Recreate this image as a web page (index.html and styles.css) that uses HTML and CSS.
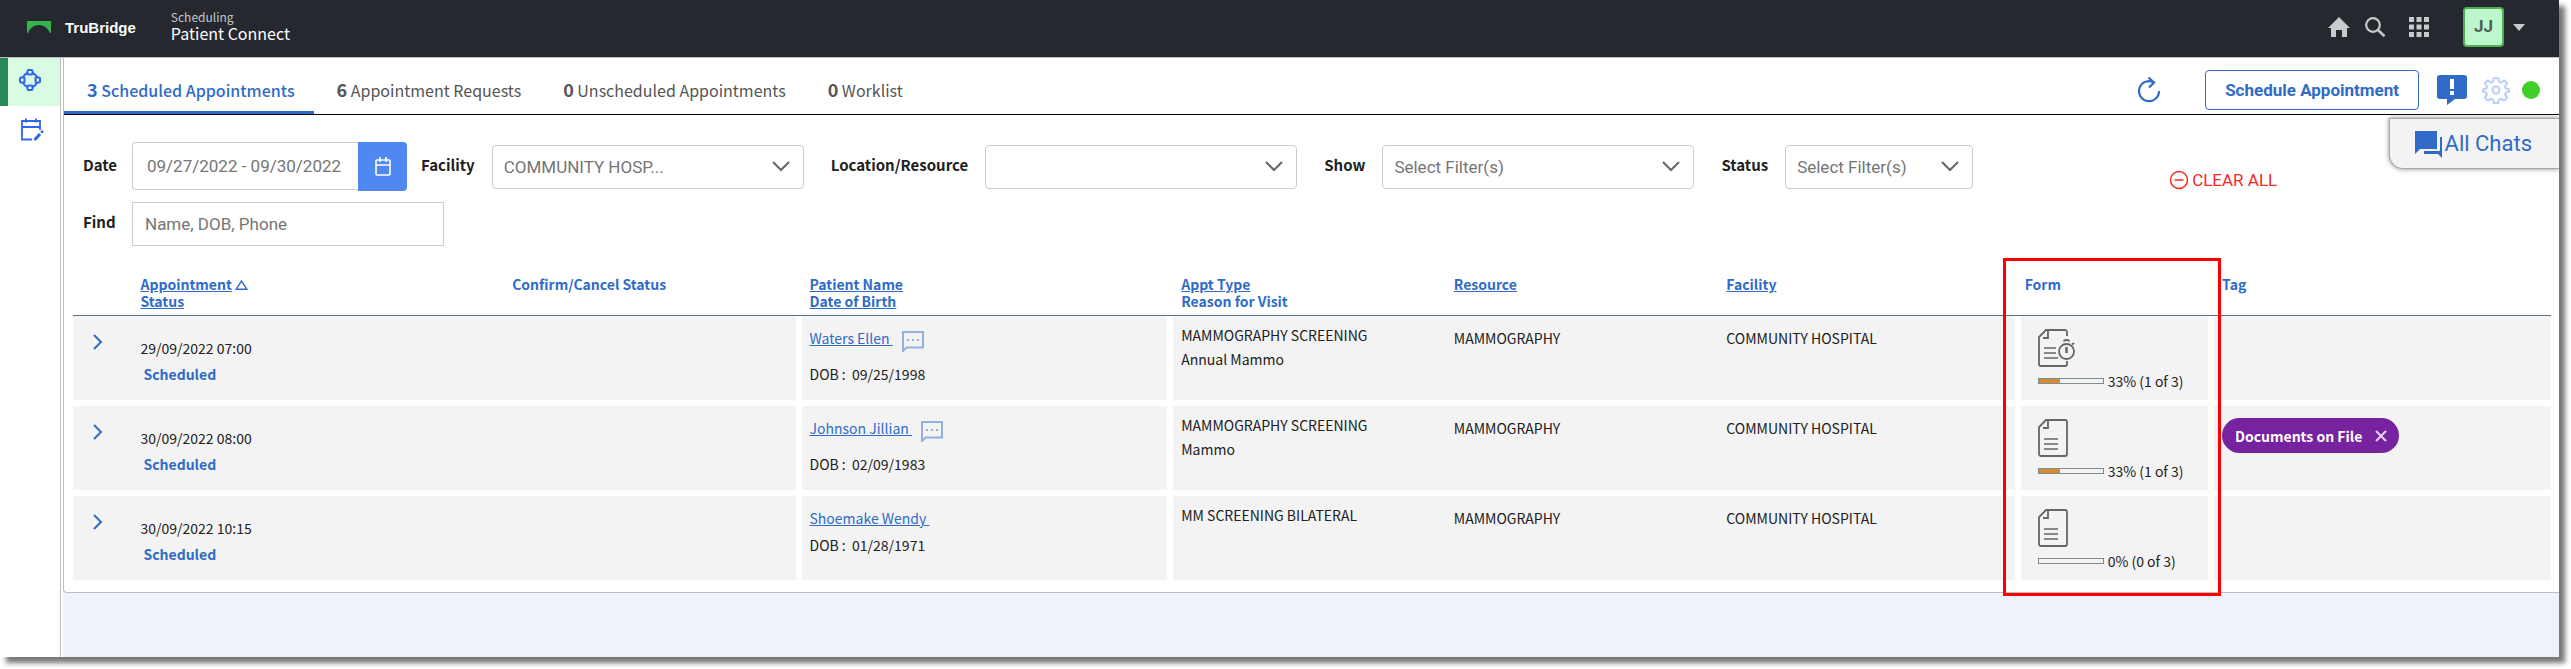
FILE: index.html
```
<!DOCTYPE html>
<html lang="en">
<head>
  <meta charset="UTF-8">
  <title>Patient Connect</title>
  <link rel="stylesheet" href="styles.css">
</head>
<body>
  <div class="app">
    <header class="topbar">
      <svg class="logo" width="24" height="12" viewBox="0 0 24 12"><path fill="#34b44a" d="M0 0h24v12h-1C21 7 17 4 12 4S3 7 1 12H0z"/></svg>
      <span class="brand">TruBridge</span>
      <div class="app-name">
        <small>Scheduling</small>
        <span>Patient Connect</span>
      </div>
      <nav class="top-icons">
        <button class="icon-btn" aria-label="Home"><svg width="22" height="20" viewBox="0 0 22 20"><path fill="#c9cacc" d="M11 0L0 11h3v9h5v-7h6v7h5v-9h3z"/></svg></button>
        <button class="icon-btn search" aria-label="Search"><svg width="21" height="20" viewBox="0 0 21 20" fill="none" stroke="#c9cacc"><circle cx="8" cy="8" r="6.8" stroke-width="2.2"/><path stroke-width="2.6" d="M13 13l6.5 6.2"/></svg></button>
        <button class="icon-btn apps" aria-label="Apps"><svg width="20" height="20" viewBox="0 0 20 20" fill="#c9cacc"><path d="M0 0h5v5H0zM7.500 0h5v5h-5zM15 0h5v5h-5zM0 7.500h5v5H0zM7.500 7.500h5v5h-5zM15 7.500h5v5h-5zM0 15h5v5H0zM7.500 15h5v5h-5zM15 15h5v5h-5z"/></svg></button>
        <button class="user" aria-label="User menu"><span class="avatar">JJ</span><svg width="12" height="7" viewBox="0 0 12 7"><path fill="#c9cacc" d="M0 0h12L6 7z"/></svg></button>
      </nav>
    </header>

    <div class="body">
      <aside class="sidebar">
        <a class="side-link active" href="#" aria-label="Patient connect">
          <svg width="22" height="22" viewBox="0 0 22 22" fill="none" stroke="#2f66ee" stroke-width="2"><circle cx="11" cy="11" r="7.500"/><g fill="#d9fbe3"><rect x="8.500" y="1" width="5" height="4.500" rx="1"/><rect x="8.500" y="16.500" width="5" height="4.500" rx="1"/><rect x="1" y="8.500" width="4.500" height="5" rx="1"/><rect x="16.500" y="8.500" width="4.500" height="5" rx="1"/></g></svg>
        </a>
        <a class="side-link" href="#" aria-label="Calendar">
          <svg width="24" height="24" viewBox="0 0 24 24" fill="none" stroke="#2f66ee" stroke-width="1.800"><path d="M12 21.500H2V3h18v9M2 9h18M6 .5v4M16 .5v4"/><path stroke-width="3" d="M14.500 22l5.500-6"/><path stroke-width="2.500" d="M21 14.500l2-1.500"/></svg>
        </a>
      </aside>

      <main class="panel">
        <div class="tabs">
          <a class="tab active" href="#"><b>3</b> Scheduled Appointments</a>
          <a class="tab" href="#"><b>6</b> Appointment Requests</a>
          <a class="tab" href="#"><b>0</b> Unscheduled Appointments</a>
          <a class="tab" href="#"><b>0</b> Worklist</a>
          <div class="actions">
            <button class="icon-btn" aria-label="Refresh"><svg width="24" height="28" viewBox="0 0 24 28" fill="none" stroke="#306bc7" stroke-width="2.200"><path d="M22 15a10 10 0 1 1-5-8.500"/><path d="M11.500 1.500l5.500 5-5 5"/></svg></button>
            <button class="schedule-btn">Schedule Appointment</button>
            <button class="icon-btn" aria-label="Alerts"><svg width="30" height="30" viewBox="0 0 30 30"><path fill="#306bc7" d="M3 0h24a3 3 0 0 1 3 3v18a3 3 0 0 1-3 3h-9l-8 6v-6H3a3 3 0 0 1-3-3V3a3 3 0 0 1 3-3z"/><path fill="#fff" d="M13 4h4v10h-4zM13 16h4v4h-4z"/></svg></button>
            <button class="icon-btn gear" aria-label="Settings"><svg width="28" height="28" viewBox="0 0 28 28" fill="none" stroke="#bdd2f4" stroke-width="2.200" stroke-linejoin="round"><path d="M11.800 2h4.400l.8 3.600 2 .8 3.100-2 3 3-2 3.100.8 2 3.100.8v2.400l-3.100.8-.8 2 2 3.100-3 3-3.100-2-2 .8-.8 3.600h-4.400l-.8-3.600-2-.8-3.100 2-3-3 2-3.100-.8-2L1.200 15.700v-2.400l2.900-.8.800-2-2-3.100 3-3 3.100 2 2-.8z"/><circle cx="14" cy="14" r="3.500"/></svg></button>
            <span class="online"></span>
          </div>
        </div>

        <button class="all-chats">
          <svg width="28" height="28" viewBox="0 0 28 28" fill="#306bc7"><path d="M0 1h22v18H5l-5 5zM25 7h2v21l-4-4H9v-3h16z"/></svg>All Chats
        </button>

        <form class="filters">
          <div class="filter-row">
            <label for="date">Date</label>
            <div class="date-box">
              <input type="text" id="date" value="09/27/2022 - 09/30/2022">
              <button type="button" aria-label="Pick dates"><svg width="16" height="19" viewBox="0 0 16 19" fill="none" stroke="#fff" stroke-width="1.600"><rect x="1" y="3" width="14" height="15" rx="1"/><path d="M1 8h14M5 0v5M11 0v5"/></svg></button>
            </div>
            <label class="facility-label" for="facility">Facility</label>
            <select id="facility"><option>COMMUNITY HOSP...</option></select>
            <label for="location">Location/Resource</label>
            <select id="location"><option></option></select>
            <label for="show">Show</label>
            <select id="show"><option>Select Filter(s)</option></select>
            <label for="status">Status</label>
            <select id="status" class="short"><option>Select Filter(s)</option></select>
            <button type="reset" class="clear"><svg width="20" height="20" viewBox="0 0 20 20" fill="none" stroke="#f5291f" stroke-width="1.500"><circle cx="10" cy="10" r="8.500"/><path d="M5.500 10h9"/></svg>CLEAR ALL</button>
          </div>
          <div class="filter-row">
            <label for="find">Find</label>
            <input type="text" id="find" class="find" placeholder="Name, DOB, Phone">
          </div>
        </form>

        <div class="table-wrap">
          <table>
            <colgroup>
              <col class="c-expand"><col class="c-appt"><col class="c-confirm"><col class="c-patient"><col class="c-type"><col class="c-resource"><col class="c-facility"><col class="c-form"><col>
            </colgroup>
            <thead>
              <tr>
                <th></th>
                <th><a href="#">Appointment</a> <svg width="13" height="10" viewBox="0 0 13 10" fill="none" stroke="#306bc7" stroke-width="1.400"><path d="M1.200 9.200h10.600L6.500 1z"/></svg><br><a href="#">Status</a></th>
                <th>Confirm/Cancel Status</th>
                <th><a href="#">Patient Name</a><br><a href="#">Date of Birth</a></th>
                <th><a href="#">Appt Type</a><br>Reason for Visit</th>
                <th><a href="#">Resource</a></th>
                <th><a href="#">Facility</a></th>
                <th class="form-head">Form</th>
                <th>Tag</th>
              </tr>
            </thead>
            <tbody>
              <tr>
                <td class="expand"><button class="icon-btn" aria-label="Expand"><svg width="10" height="16" viewBox="0 0 10 16" fill="none" stroke="#306bc7" stroke-width="2"><path d="M1 1l7 7-7 7"/></svg></button></td>
                <td class="when">29/09/2022 07:00<a href="#">Scheduled</a></td>
                <td class="group-end"></td>
                <td class="group-end patient">
                  <div class="name chat"><a href="#">Waters Ellen&nbsp;</a><svg width="22" height="21" viewBox="0 0 22 21"><path fill="none" stroke="#94b0e0" stroke-width="2" d="M1 20V1h20v15.500H4.500z"/><path fill="#94b0e0" d="M5 8h2v2H5zM10 8h2v2h-2zM15 8h2v2h-2z"/></svg></div>
                  <div>DOB :&nbsp; 09/25/1998</div>
                </td>
                <td class="type">MAMMOGRAPHY SCREENING<br>Annual Mammo</td>
                <td>MAMMOGRAPHY</td>
                <td class="group-end">COMMUNITY HOSPITAL</td>
                <td class="group-end form">
                  <svg width="38" height="38" viewBox="0 0 38 38" fill="none" stroke="#666" stroke-width="1.800"><path d="M29 7V3a2 2 0 0 0-2-2H8L1 8v27a2 2 0 0 0 2 2h24a2 2 0 0 0 2-2v-3M10 1v8H5"/><path stroke="#888" stroke-width="2" d="M6 19h12M6 24h12M6 29h14"/><circle cx="28.500" cy="22.500" r="7.500"/><path d="M26 12.500c0-2 5-2 5 0M34 15.500l2-1.500"/><path stroke-width="2.500" d="M28.500 18v6"/></svg>
                  <div class="progress"><span class="bar"><i style="width: 33%"></i></span>33% (1 of 3)</div>
                </td>
                <td></td>
              </tr>
              <tr>
                <td class="expand"><button class="icon-btn" aria-label="Expand"><svg width="10" height="16" viewBox="0 0 10 16" fill="none" stroke="#306bc7" stroke-width="2"><path d="M1 1l7 7-7 7"/></svg></button></td>
                <td class="when">30/09/2022 08:00<a href="#">Scheduled</a></td>
                <td class="group-end"></td>
                <td class="group-end patient">
                  <div class="name chat"><a href="#">Johnson Jillian&nbsp;</a><svg width="22" height="21" viewBox="0 0 22 21"><path fill="none" stroke="#94b0e0" stroke-width="2" d="M1 20V1h20v15.500H4.500z"/><path fill="#94b0e0" d="M5 8h2v2H5zM10 8h2v2h-2zM15 8h2v2h-2z"/></svg></div>
                  <div>DOB :&nbsp; 02/09/1983</div>
                </td>
                <td class="type">MAMMOGRAPHY SCREENING<br>Mammo</td>
                <td>MAMMOGRAPHY</td>
                <td class="group-end">COMMUNITY HOSPITAL</td>
                <td class="group-end form">
                  <svg width="30" height="38" viewBox="0 0 30 38" fill="none" stroke="#666" stroke-width="1.800"><path d="M8 1h19a2 2 0 0 1 2 2v32a2 2 0 0 1-2 2H3a2 2 0 0 1-2-2V8zM10 1v8H5"/><path stroke="#888" stroke-width="2" d="M6 20h14M6 25h14M6 30h14"/></svg>
                  <div class="progress"><span class="bar"><i style="width: 33%"></i></span>33% (1 of 3)</div>
                </td>
                <td class="tags"><span class="tag">Documents on File <button aria-label="Remove tag"><svg width="12" height="12" viewBox="0 0 12 12" stroke="#e6d5ef" stroke-width="2"><path d="M1 1l10 10M11 1L1 11"/></svg></button></span></td>
              </tr>
              <tr>
                <td class="expand"><button class="icon-btn" aria-label="Expand"><svg width="10" height="16" viewBox="0 0 10 16" fill="none" stroke="#306bc7" stroke-width="2"><path d="M1 1l7 7-7 7"/></svg></button></td>
                <td class="when">30/09/2022 10:15<a href="#">Scheduled</a></td>
                <td class="group-end"></td>
                <td class="group-end patient">
                  <div class="name"><a href="#">Shoemake Wendy&nbsp;</a></div>
                  <div>DOB :&nbsp; 01/28/1971</div>
                </td>
                <td class="type">MM SCREENING BILATERAL</td>
                <td>MAMMOGRAPHY</td>
                <td class="group-end">COMMUNITY HOSPITAL</td>
                <td class="group-end form">
                  <svg width="30" height="38" viewBox="0 0 30 38" fill="none" stroke="#666" stroke-width="1.800"><path d="M8 1h19a2 2 0 0 1 2 2v32a2 2 0 0 1-2 2H3a2 2 0 0 1-2-2V8zM10 1v8H5"/><path stroke="#888" stroke-width="2" d="M6 20h14M6 25h14M6 30h14"/></svg>
                  <div class="progress"><span class="bar"><i style="width: 0%"></i></span>0% (0 of 3)</div>
                </td>
                <td></td>
              </tr>
            </tbody>
          </table>
          <div class="highlight"></div>
        </div>
      </main>
    </div>
  </div>
</body>
</html>
```
FILE: styles.css
```
:root {
  --blue: #306bc7;
  --dark: #25282e;
  --text: #212121;
  --line: #bdbdbd;
  --row: #f3f3f3;
}

* { box-sizing: border-box; }

body {
  margin: 0;
  height: 100vh;
  padding: 0 12px 12px 0;
  overflow: hidden;
  background: white;
  color: var(--text);
  font-family: "Noto Sans CJK SC", "Noto Sans", sans-serif;
  font-size: 14px;
}
a { color: var(--blue); }
button, input, select { font-family: Roboto, sans-serif; }
button { cursor: pointer; }
svg { flex: none; }

.app {
  display: flex;
  flex-direction: column;
  height: 100%;
  background: white;
  box-shadow: 6px 6px 5px #777;
}
.icon-btn {
  display: flex;
  padding: 0;
  border: none;
  background: none;
}

/* top bar */
.topbar {
  display: flex;
  align-items: center;
  height: 58px;
  padding: 0 34px 3px 27px;
  background: var(--dark);
  border-bottom: 1px solid var(--line);
  color: white;
}
.brand {
  margin: 0 35px 0 14px;
  font: bold 15px "Liberation Sans", sans-serif;
}
.app-name {
  display: flex;
  flex-direction: column;
  padding-bottom: 3px;
  font-size: 16px;
  line-height: 18px;
}
.app-name small {
  font-size: 12px;
  line-height: 14px;
  color: #c4c6c9;
}
.top-icons {
  display: flex;
  align-items: center;
  margin-left: auto;
}
.search { margin-left: 15px; }
.apps { margin-left: 23px; }
.user {
  display: flex;
  align-items: center;
  gap: 9px;
  margin-left: 34px;
  padding: 0;
  border: none;
  background: none;
}
.avatar {
  width: 41px;
  height: 40px;
  border: 2px solid #4fae50;
  border-radius: 4px;
  background: #bff7cd;
  color: #4c6353;
  font-size: 17px;
  font-weight: bold;
  line-height: 35px;
}

/* side bar */
.body {
  display: flex;
  flex: 1;
  align-items: flex-start;
  background: #eef2fb;
}
.sidebar {
  align-self: stretch;
  flex: none;
  width: 63px;
  background: linear-gradient(to right, white 60px, var(--line) 60px, var(--line) 61px, white 61px);
}
.side-link {
  display: flex;
  align-items: center;
  height: 48px;
  padding-left: 20px;
}
.side-link.active {
  width: 60px;
  padding: 0 0 4px 11px;
  border-left: 8px solid #27895a;
  background: #d9fbe3;
}

.panel {
  position: relative;
  flex: 1;
  min-width: 0;
  padding-bottom: 6px;
  background: white;
  border-left: 1px solid var(--line);
  border-bottom: 1px solid var(--line);
  border-bottom-left-radius: 4px;
}

/* tabs */
.tabs {
  display: flex;
  height: 57px;
  border-bottom: 1px solid black;
}
.tab {
  padding: 0 19px 0 23px;
  color: #555;
  font-size: 16px;
  line-height: 62px;
  text-decoration: none;
  white-space: nowrap;
}
.tab b { font-size: 18px; }
.tab.active {
  border-bottom: 3px solid var(--blue);
  color: var(--blue);
  font-weight: 500;
}
.actions {
  display: flex;
  align-items: center;
  margin-left: auto;
  padding: 7px 19px 0 0;
}
.schedule-btn {
  height: 40px;
  margin: 0 18px 0 44px;
  padding: 0 19px;
  background: white;
  border: 1px solid var(--blue);
  border-radius: 4px;
  color: var(--blue);
  font-size: 17px;
  font-weight: bold;
}
.gear { margin: 0 12px 0 15px; }
.online {
  width: 18px;
  height: 18px;
  border-radius: 50%;
  background: #3dcf27;
}

.all-chats {
  position: absolute;
  top: 60px;
  right: 0;
  display: flex;
  align-items: center;
  height: 51px;
  padding: 0 27px 0 25px;
  gap: 2px;
  background: var(--row);
  border: 1px solid #aaa;
  border-right: none;
  border-radius: 0 0 0 14px;
  box-shadow: 0 0 5px #888;
  clip-path: inset(-6px 0 -6px -6px);
  color: var(--blue);
  font-size: 22px;
}

/* filters */
.filters { padding: 27px 19px 0; }
.filter-row {
  display: flex;
  align-items: center;
  min-height: 49px;
  margin-bottom: 8px;
}
.filter-row label {
  margin: 0 17px 0 27px;
  padding-bottom: 3px;
  font-size: 15px;
  font-weight: bold;
  line-height: 20px;
  white-space: nowrap;
}
.filter-row label:first-child {
  min-width: 35px;
  margin: 0 14px 0 0;
}
.filter-row .facility-label { margin-left: 14px; }
.date-box { display: flex; }
.date-box input, .find, select {
  height: 44px;
  border: 1px solid #ccc;
  border-radius: 4px;
  background: white;
  color: #757575;
  font-size: 17px;
}
.date-box input {
  width: 226px;
  height: 48px;
  padding: 0 14px;
  border-right: none;
  border-radius: 4px 0 0 4px;
}
.date-box button {
  display: flex;
  align-items: center;
  justify-content: center;
  width: 49px;
  height: 49px;
  padding: 0;
  border: none;
  border-radius: 0 4px 4px 0;
  background: #4f88f1;
}
select {
  width: 312px;
  padding: 0 11px;
  appearance: none;
  background: white url("data:image/svg+xml,%3Csvg xmlns='http://www.w3.org/2000/svg' width='18' height='11' fill='none' stroke='%23666' stroke-width='2'%3E%3Cpath d='M1 1l8 8 8-8'/%3E%3C/svg%3E") no-repeat right 13px center;
}
select.short { width: 188px; }
.find {
  width: 312px;
  border-radius: 0;
  padding: 0 12px;
}
.find::placeholder { color: #757575; }
.clear {
  display: flex;
  align-items: center;
  gap: 3px;
  margin-left: 196px;
  padding: 26px 0 0;
  border: none;
  background: none;
  color: #f5291f;
  font-size: 17px;
}

/* appointments */
.table-wrap {
  position: relative;
  margin: 28px 8px 0 9px;
}
table {
  width: 100%;
  table-layout: fixed;
  border-spacing: 0;
}
.c-expand { width: 2.4%; }
.c-appt { width: 15%; }
.c-confirm { width: 12%; }
.c-patient { width: 15%; }
.c-type { width: 11%; }
.c-resource { width: 11%; }
.c-facility { width: 12.2%; }
.c-form { width: 7.8%; }

th {
  padding: 0 8px 5px;
  border-bottom: 1px solid #5f7486;
  color: var(--blue);
  line-height: 17px;
  text-align: left;
  vertical-align: top;
}
th.form-head { padding-left: 4px; }
td {
  height: 90px;
  padding: 10px 8px 0;
  background: var(--row);
  border-bottom: 6px solid white;
  line-height: 24px;
  vertical-align: top;
}
td.group-end { border-right: 6px solid white; }
td.expand { padding: 18px 20px 0; }
td.when {
  padding-top: 19px;
  line-height: 26px;
}
.when a {
  display: block;
  padding-left: 3px;
  font-weight: bold;
  text-decoration: none;
}
td.patient {
  padding-top: 9px;
  line-height: 27px;
}
.name {
  display: flex;
  align-items: flex-end;
  gap: 9px;
}
.name.chat { padding-bottom: 9px; }
td.type { padding-top: 7px; }
td.form { padding: 13px 0 0 17px; }
.form svg {
  display: block;
  margin-bottom: 4px;
}
.progress {
  display: flex;
  align-items: center;
  gap: 4px;
  line-height: 20px;
}
.bar {
  display: flex;
  width: 66px;
  height: 6px;
  border: 1px solid #7d8c8f;
}
.bar i { background: #d68a35; }
td.tags { padding-top: 12px; }
.tag {
  display: inline-flex;
  align-items: center;
  gap: 13px;
  height: 35px;
  padding: 0 12px 0 13px;
  border-radius: 18px;
  background: #77229f;
  color: white;
  font-weight: bold;
}
.tag button {
  display: flex;
  padding: 0;
  border: none;
  background: none;
}

/* box around the form column */
.highlight {
  position: absolute;
  top: -18px;
  bottom: -10px;
  left: 77.9%;
  width: 8.8%;
  border: 3px solid red;
  pointer-events: none;
}
```
